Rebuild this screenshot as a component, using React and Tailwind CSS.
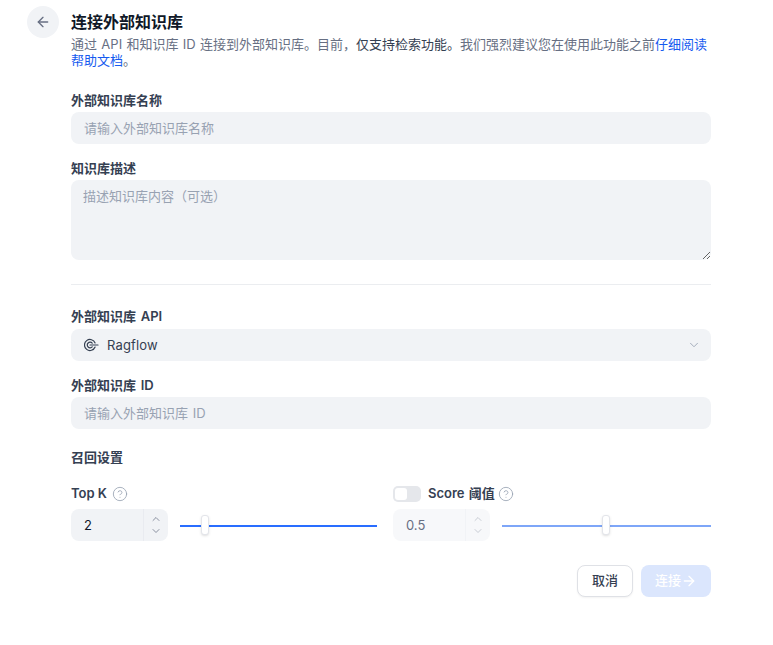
import React from "react";
import { ArrowLeft, ChevronDown, ChevronUp, ArrowRight, CircleHelp } from "lucide-react";

const font = { fontFamily: 'Inter, "Noto Sans CJK SC", sans-serif' };

function Label({ children }) {
  return <div className="h-6 leading-6 text-[13px] font-semibold text-[#354052] [word-spacing:1.5px]">{children}</div>;
}

function Stepper({ value, dim }) {
  return (
    <div className={`flex h-8 w-[97px] rounded-lg ${dim ? "bg-[#f7f8fa]" : "bg-[#f1f3f6]"}`}>
      <div className={`flex-1 pl-[13px] text-[13px] leading-8 ${dim ? "text-[#676f83]" : "text-[#101828]"}`}>{value}</div>
      <div className={`flex w-[25px] flex-col items-center justify-center border-l pr-px ${dim ? "border-[#f1f3f6] text-[#b8bdc7]" : "border-[#e9ebf0] text-[#676f83]"}`}>
        <ChevronUp size={12} strokeWidth={1.5} />
        <ChevronDown size={12} strokeWidth={1.5} />
      </div>
    </div>
  );
}

function Slider({ width, pos, dim }) {
  return (
    <div className={`relative mt-[2px] h-[2px] ${width} ${dim ? "bg-[#7ea6f8]" : "bg-[#296dff]"}`}>
      <div className="absolute top-[-10px] h-5 w-2 rounded-[3px] border border-[#e3e5ea] bg-white shadow-sm" style={{ left: pos }} />
    </div>
  );
}

function Help() {
  return <CircleHelp size={16} strokeWidth={1.25} className="text-[#98a2b2]" />;
}

export default function App() {
  return (
    <div className="flex min-h-[645px] gap-3 bg-white pl-[27px] pt-[6px]" style={font}>
      <button className="flex h-8 w-8 shrink-0 items-center justify-center rounded-full bg-[#f1f3f6] text-[#676f83]">
        <ArrowLeft size={16} strokeWidth={2} />
      </button>
      <div className="w-[640px]">
        <h1 className="mt-[5px] h-[22px] text-[16px] font-semibold leading-[22px] text-[#101828]">连接外部知识库</h1>
        <p className="mt-[3px] h-8 text-[13px] leading-4 text-[#676f83] [word-spacing:0.7px]">
          通过 API 和知识库 ID 连接到外部知识库。目前，<span className="text-[#354052]">仅支持检索功能。</span>我们强烈建议您在使用此功能之前<a className="text-[#155aef]">仔细阅读帮助文档</a>。
        </p>

        <div className="mt-5"><Label>外部知识库名称</Label></div>
        <input
          placeholder="请输入外部知识库名称"
          className="block h-8 w-full rounded-lg bg-[#f1f3f6] px-[13px] text-[13px] outline-none placeholder:text-[#98a2b2]"
        />

        <div className="mt-3"><Label>知识库描述</Label></div>
        <textarea
          placeholder="描述知识库内容（可选）"
          className="block h-20 w-full rounded-lg bg-[#f1f3f6] px-3 py-2 text-[13px] leading-4 outline-none placeholder:text-[#98a2b2]"
        />

        <div className="mt-6 h-px bg-[#ebedf0]" />

        <div className="mt-[19px]"><Label>外部知识库 API</Label></div>
        <div className="mt-px flex h-8 items-center rounded-lg bg-[#f1f3f6] pl-[13px] pr-[10px]">
          <svg width="16" height="16" viewBox="0 0 16 16" fill="none" stroke="#354052" strokeWidth="1.2" strokeLinecap="round">
            <path d="M11.1 10A5.5 5.5 0 1 1 11.1 6" />
            <path d="M8.2 9.8A2.8 2.8 0 1 1 8.2 6.2" />
            <path d="M6 8h8" />
          </svg>
          <span className="ml-[7px] flex-1 pt-px text-[13px] tracking-[0.15px] text-[#354052]">Ragflow</span>
          <ChevronDown size={14} strokeWidth={1.5} className="text-[#98a2b2]" />
        </div>

        <div className="mt-3"><Label>外部知识库 ID</Label></div>
        <input
          placeholder="请输入外部知识库 ID"
          className="block h-8 w-full rounded-lg bg-[#f1f3f6] px-[13px] text-[13px] [word-spacing:1px] outline-none placeholder:text-[#98a2b2]"
        />

        <div className="mt-4 h-6 text-[13px] font-semibold leading-6 text-[#354052]">召回设置</div>

        <div className="mt-[13px] flex">
          <div className="w-[323px]">
            <div className="flex h-6 items-center gap-[5px] text-[13px] font-semibold text-[#354052]">
              Top K <Help />
            </div>
            <div className="mt-[3px] flex items-center gap-3">
              <Stepper value="2" />
              <Slider width="w-[197px]" pos="21px" />
            </div>
          </div>
          <div className="flex-1">
            <div className="flex h-6 items-center text-[13px] font-semibold text-[#354052]">
              <div className="flex h-4 w-7 items-center rounded-[5px] bg-[#e5e7eb] p-[2px]">
                <div className="h-3 w-3 rounded-[3px] bg-white" />
              </div>
              <span className="ml-[7px] [word-spacing:1px]">Score 阈值</span>
              <span className="ml-[3px]"><Help /></span>
            </div>
            <div className="mt-[3px] flex items-center gap-3">
              <Stepper value="0.5" dim />
              <Slider width="w-[209px]" pos="100px" dim />
            </div>
          </div>
        </div>

        <div className="mt-6 flex justify-end gap-2">
          <button className="h-8 w-14 rounded-lg border border-[#dfe1e6] bg-white text-[13px] font-medium text-[#354052] shadow-xs">取消</button>
          <button className="flex h-8 w-[70px] items-center justify-center rounded-lg bg-[#dbe6fd] text-[13px] font-medium text-white">
            连接<ArrowRight size={16} strokeWidth={2} />
          </button>
        </div>
      </div>
    </div>
  );
}
